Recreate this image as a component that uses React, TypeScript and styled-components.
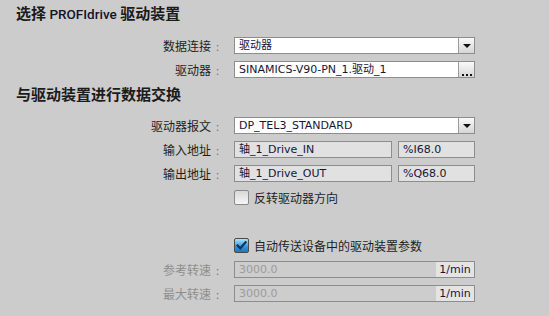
import React from 'react';
import styled, { createGlobalStyle, css } from 'styled-components';

const Global = createGlobalStyle`
  html, body { margin: 0; padding: 0; background: #cccccc; }
  body {
    width: 549px; height: 316px; overflow: hidden;
    font-family: "DejaVu Sans", "Noto Sans CJK SC", sans-serif;
  }
`;

const Page = styled.div`
  width: 549px;
  height: 316px;
  box-sizing: border-box;
  padding-left: 16px;
  background: #cccccc;
  display: flex;
  flex-direction: column;
`;

const SectionTitle = styled.h2<{ $top: number }>`
  margin: ${p => p.$top}px 0 0 0;
  height: 24px;
  line-height: 24px;
  font-family: "Noto Sans CJK SC", sans-serif;
  font-size: 15px;
  font-weight: 700;
  color: #1b1b1b;
  white-space: nowrap;
`;

const TitleLatin = styled.span`
  font-family: Roboto, sans-serif;
  font-size: 13.5px;
  font-weight: 500;
  color: #14142a;
`;

const Form = styled.div<{ $top: number }>`
  margin-top: ${p => p.$top}px;
  display: flex;
  flex-direction: column;
  gap: 7px;
`;

const Row = styled.div<{ $extraTop?: number }>`
  display: grid;
  grid-template-columns: 204px 241px;
  column-gap: 14px;
  height: 17px;
  margin-top: ${p => p.$extraTop ?? 0}px;
`;

const Label = styled.div<{ $disabled?: boolean }>`
  display: flex;
  justify-content: flex-end;
  align-items: center;
  font-family: "Noto Sans CJK SC", sans-serif;
  font-size: 12px;
  color: ${p => (p.$disabled ? '#8e8e8e' : '#1e1e1e')};
  white-space: nowrap;
`;

const Colon = styled.span`
  margin-left: 5px;
  width: 4px;
  color: #7a7a7a;
  font-size: 11px;
`;

const Fields = styled.div`
  display: grid;
  grid-template-columns: 158px 77px;
  column-gap: 6px;
`;

type Variant = 'edit' | 'readonly' | 'disabled';

const Field = styled.div<{ $variant: Variant }>`
  box-sizing: border-box;
  height: 17px;
  border: 1px solid #8d8d8d;
  display: flex;
  align-items: stretch;
  overflow: hidden;
  ${p =>
    p.$variant === 'edit'
      ? css`background: #ffffff;`
      : p.$variant === 'readonly'
      ? css`background: #e1e1e1;`
      : css`background: #cdcdcd;`}
`;

const Value = styled.span<{ $disabled?: boolean }>`
  flex: 1;
  padding-left: 4px;
  display: flex;
  align-items: center;
  font-size: 11px;
  line-height: 13px;
  color: ${p => (p.$disabled ? '#9b9b9b' : '#16163a')};
  white-space: nowrap;
`;

const SideButton = styled.div`
  width: 15px;
  border-left: 1px solid #9c9c9c;
  background: linear-gradient(#fafafa, #d6d6d6);
  display: flex;
  justify-content: center;
`;

const Arrow = styled.div`
  margin-top: 6px;
  width: 0;
  height: 0;
  border-left: 4px solid transparent;
  border-right: 4px solid transparent;
  border-top: 4px solid #111;
`;

const Dots = styled.div`
  align-self: flex-end;
  margin-bottom: 1px;
  display: flex;
  gap: 2px;
`;

const Dot = styled.span`
  width: 2px;
  height: 2px;
  background: #111;
`;

const Unit = styled.span`
  width: 38px;
  background: #e4e4e4;
  display: flex;
  align-items: center;
  justify-content: center;
  font-size: 11px;
  color: #16163a;
`;

const CheckRow = styled.label`
  display: flex;
  align-items: center;
  gap: 5px;
  font-family: "Noto Sans CJK SC", sans-serif;
  font-size: 12px;
  color: #1e1e1e;
  white-space: nowrap;
`;

const Box = styled.span<{ $checked?: boolean }>`
  box-sizing: border-box;
  width: 15px;
  height: 15px;
  border-radius: 2px;
  border: 1px solid ${p => (p.$checked ? '#4a4a4a' : '#8a8a8a')};
  background: ${p =>
    p.$checked
      ? 'linear-gradient(#a9e6ff, #2f93d8 60%, #1f78c0)'
      : 'linear-gradient(#d8d8d8, #f6f6f6)'};
  display: flex;
  align-items: center;
  justify-content: center;
`;

const Checkbox: React.FC<{ checked?: boolean; children: React.ReactNode }> = ({ checked, children }) => (
  <CheckRow>
    <Box $checked={checked}>
      {checked && (
        <svg width="11" height="11" viewBox="0 0 11 11">
          <path d="M1.5 5.5 L4.3 8.3 L9.6 2.2" fill="none" stroke="#13325f" strokeWidth="2.2" strokeLinecap="square" />
        </svg>
      )}
    </Box>
    {children}
  </CheckRow>
);

const FormLabel: React.FC<{ text: string; disabled?: boolean }> = ({ text, disabled }) => (
  <Label $disabled={disabled}>
    {text}
    <Colon>:</Colon>
  </Label>
);

export default function App() {
  return (
    <Page>
      <Global />
      <SectionTitle $top={1}>
        选择 <TitleLatin>PROFIdrive</TitleLatin> 驱动装置
      </SectionTitle>
      <Form $top={12}>
        <Row>
          <FormLabel text="数据连接" />
          <Field $variant="edit">
            <Value>驱动器</Value>
            <SideButton><Arrow /></SideButton>
          </Field>
        </Row>
        <Row>
          <FormLabel text="驱动器" />
          <Field $variant="edit">
            <Value>SINAMICS-V90-PN_1.驱动_1</Value>
            <SideButton><Dots><Dot /><Dot /><Dot /></Dots></SideButton>
          </Field>
        </Row>
      </Form>
      <SectionTitle $top={4}>与驱动装置进行数据交换</SectionTitle>
      <Form $top={11}>
        <Row>
          <FormLabel text="驱动器报文" />
          <Field $variant="edit">
            <Value>DP_TEL3_STANDARD</Value>
            <SideButton><Arrow /></SideButton>
          </Field>
        </Row>
        <Row>
          <FormLabel text="输入地址" />
          <Fields>
            <Field $variant="readonly"><Value>轴_1_Drive_IN</Value></Field>
            <Field $variant="readonly"><Value>%I68.0</Value></Field>
          </Fields>
        </Row>
        <Row>
          <FormLabel text="输出地址" />
          <Fields>
            <Field $variant="readonly"><Value>轴_1_Drive_OUT</Value></Field>
            <Field $variant="readonly"><Value>%Q68.0</Value></Field>
          </Fields>
        </Row>
        <Row>
          <span />
          <Checkbox>反转驱动器方向</Checkbox>
        </Row>
        <Row $extraTop={24}>
          <span />
          <Checkbox checked>自动传送设备中的驱动装置参数</Checkbox>
        </Row>
        <Row>
          <FormLabel text="参考转速" disabled />
          <Field $variant="disabled">
            <Value $disabled>3000.0</Value>
            <Unit>1/min</Unit>
          </Field>
        </Row>
        <Row>
          <FormLabel text="最大转速" disabled />
          <Field $variant="disabled">
            <Value $disabled>3000.0</Value>
            <Unit>1/min</Unit>
          </Field>
        </Row>
      </Form>
    </Page>
  );
}
